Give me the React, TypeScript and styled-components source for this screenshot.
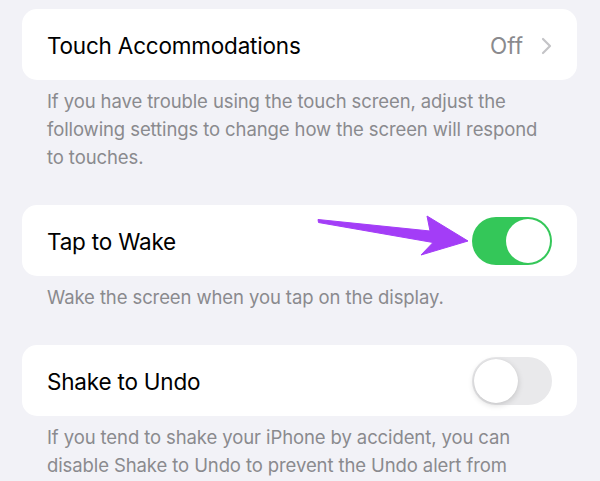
import styled, { createGlobalStyle } from 'styled-components'

const GlobalStyle = createGlobalStyle`
  html, body {
    margin: 0;
    padding: 0;
    background: #f2f2f7;
  }
  body {
    font-family: Inter, "Noto Sans", "Liberation Sans", sans-serif;
    -webkit-font-smoothing: antialiased;
  }
`

const Page = styled.div`
  width: 600px;
  height: 481px;
  overflow: hidden;
  padding-top: 9px;
  box-sizing: border-box;
  background: #f2f2f7;
`

const Section = styled.section`
  margin-bottom: 34px;
`

const Card = styled.div`
  position: relative;
  margin: 0 23px 0 22px;
  height: 71px;
  padding: 2px 25px 0;
  box-sizing: border-box;
  background: #ffffff;
  border-radius: 15px;
  display: flex;
  align-items: center;
  justify-content: space-between;
`

const Title = styled.span`
  font-size: 22.5px;
  color: #000000;
  letter-spacing: -0.2px;
`

const Detail = styled.div`
  display: flex;
  align-items: center;
  gap: 18px;
  font-size: 22.5px;
  color: #8a8a8e;
`

const Footer = styled.p`
  margin: 7px 0 0;
  padding: 0 45px 0 47px;
  font-size: 18.5px;
  line-height: 28px;
  color: #8a8a8e;
  letter-spacing: -0.1px;
`

const Track = styled.div<{ $on: boolean }>`
  position: relative;
  width: 80px;
  height: 48px;
  margin-top: -2px;
  border-radius: 24px;
  background: ${(p) => (p.$on ? '#34c759' : '#e9e9eb')};
`

const Knob = styled.div<{ $on: boolean }>`
  position: absolute;
  top: 2px;
  left: ${(p) => (p.$on ? '34px' : '2px')};
  width: 44px;
  height: 44px;
  border-radius: 50%;
  background: #ffffff;
  box-shadow: ${(p) =>
    p.$on ? 'none' : '0 2px 6px rgba(0,0,0,0.16), 0 0 1px rgba(0,0,0,0.08)'};
`

const Pointer = styled.svg`
  position: absolute;
  left: 294px;
  top: 9px;
`

const Toggle = ({ on }: { on: boolean }) => (
  <Track $on={on}>
    <Knob $on={on} />
  </Track>
)

const Chevron = () => (
  <svg width="11" height="18" viewBox="0 0 11 18">
    <path d="M2 2 L9 9 L2 16" fill="none" stroke="#c4c4c7" strokeWidth="2.2" strokeLinecap="round" strokeLinejoin="round" />
  </svg>
)

// purple annotation arrow over the Tap to Wake row
const Arrow = () => (
  <Pointer width="180" height="50" viewBox="316 215 180 50">
    <path
      d="M318 220.5 L430 232 L427 217 L468 242 L421 256 L433 243.5 L318.5 223.5 Z"
      fill="#a33df7"
      stroke="#a33df7"
      strokeWidth="1"
      strokeLinejoin="round"
    />
  </Pointer>
)

export default function App() {
  return (
    <>
      <GlobalStyle />
      <Page>
        <Section>
          <Card>
            <Title>Touch Accommodations</Title>
            <Detail>
              Off
              <Chevron />
            </Detail>
          </Card>
          <Footer>
            If you have trouble using the touch screen, adjust the following settings to change how the
            screen will respond to touches.
          </Footer>
        </Section>
        <Section>
          <Card>
            <Title>Tap to Wake</Title>
            <Arrow />
            <Toggle on />
          </Card>
          <Footer>Wake the screen when you tap on the display.</Footer>
        </Section>
        <Section>
          <Card>
            <Title>Shake to Undo</Title>
            <Toggle on={false} />
          </Card>
          <Footer>
            If you tend to shake your iPhone by accident, you can disable Shake to Undo to prevent the Undo
            alert from appearing.
          </Footer>
        </Section>
      </Page>
    </>
  )
}
